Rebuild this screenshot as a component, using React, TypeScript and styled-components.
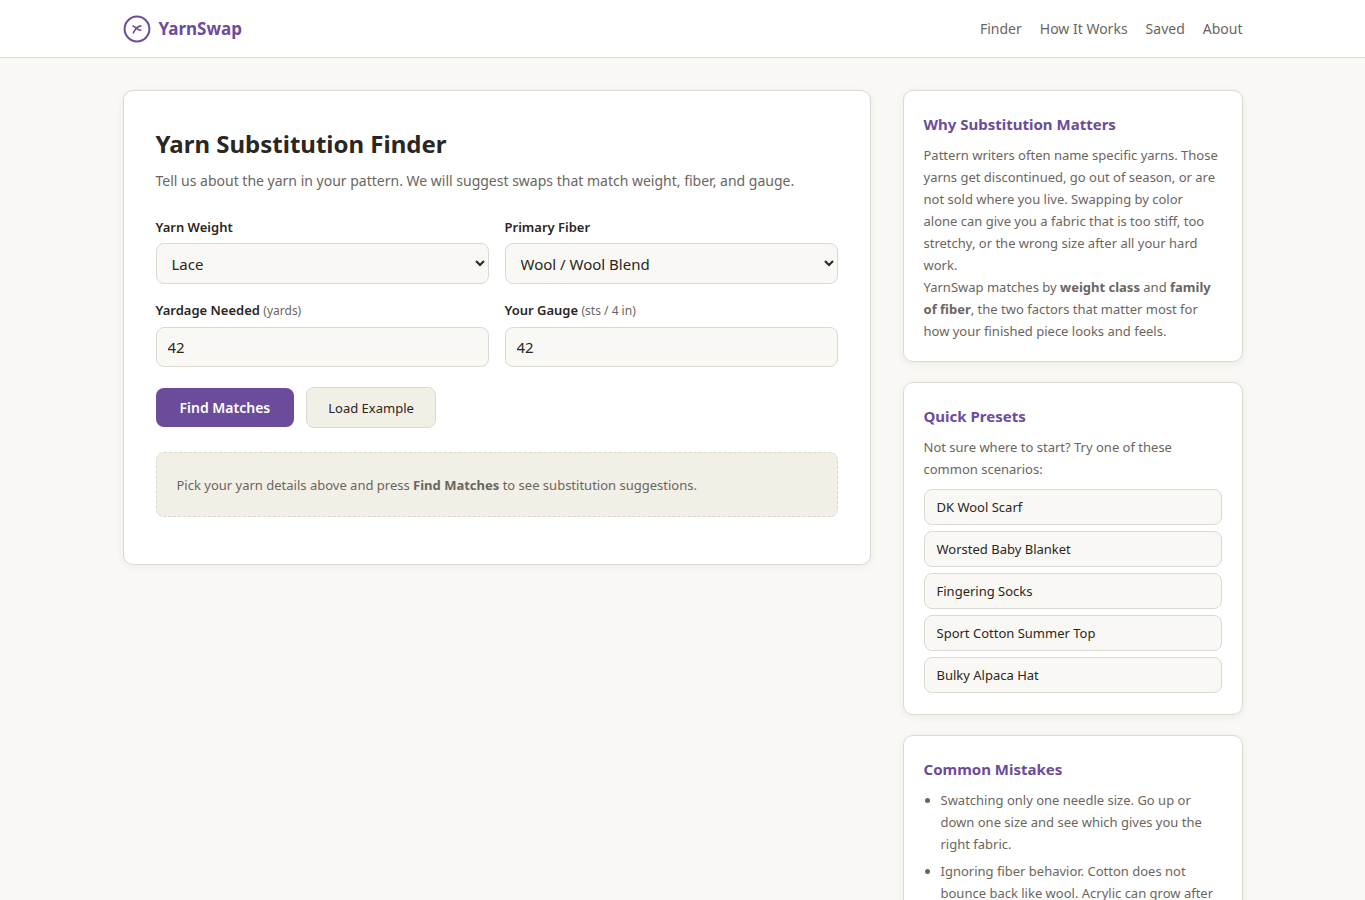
import React, { useState } from "react";
import styled, { createGlobalStyle } from "styled-components";

const color = {
  page: "#f9f8f4",
  panel: "#ffffff",
  soft: "#f2efe6",
  line: "#dad9d2",
  text: "#2a2622",
  muted: "#6b6560",
  accent: "#6b4c9a",
};

const GlobalStyle = createGlobalStyle`
  *, *::before, *::after { box-sizing: border-box; }
  body {
    margin: 0;
    background: ${color.page};
    color: ${color.text};
    font-family: "Segoe UI", "Noto Sans", "Open Sans", sans-serif;
    font-size: 14px;
    line-height: 22px;
  }
  h1, h2, p, ul { margin: 0; }
  button, input, select { font-family: inherit; color: inherit; }
`;

const Header = styled.header`
  background: ${color.panel};
  border-bottom: 1px solid ${color.line};
`;

const HeaderInner = styled.div`
  max-width: 1160px;
  margin: 0 auto;
  padding: 14px 20px;
  display: flex;
  align-items: center;
  justify-content: space-between;
`;

const Brand = styled.a`
  display: flex;
  align-items: center;
  gap: 8px;
  color: ${color.accent};
  font-size: 17px;
  font-weight: 700;
  line-height: 29px;
  text-decoration: none;
`;

const Nav = styled.nav`
  display: flex;
  gap: 18px;
`;

const NavLink = styled.a`
  color: ${color.muted};
  font-size: 14px;
  text-decoration: none;
`;

const Page = styled.div`
  max-width: 1160px;
  margin: 0 auto;
  padding: 32px 20px;
  display: grid;
  grid-template-columns: minmax(0, 1fr) 340px;
  gap: 32px;
  align-items: start;

  @media (max-width: 860px) {
    grid-template-columns: minmax(0, 1fr);
  }
`;

const Card = styled.section`
  background: ${color.panel};
  border: 1px solid ${color.line};
  border-radius: 10px;
  box-shadow: 0 2px 8px rgba(44, 40, 37, 0.06);
`;

const FinderCard = styled(Card)`
  padding: 32px 32px 47px;
`;

const Title = styled.h1`
  font-size: 24px;
  font-weight: 700;
  line-height: 42px;
`;

const Lead = styled.p`
  margin-top: 4px;
  color: ${color.muted};
  font-size: 14px;
  line-height: 24px;
`;

const Fields = styled.div`
  margin-top: 23px;
  display: grid;
  grid-template-columns: repeat(2, minmax(0, 1fr));
  gap: 15px 16px;
`;

const Field = styled.div`
  display: flex;
  flex-direction: column;
  gap: 5px;
`;

const Label = styled.label`
  font-size: 13px;
  font-weight: 600;
`;

const Unit = styled.span`
  color: ${color.muted};
  font-size: 12px;
  font-weight: 400;
`;

const Select = styled.select`
  height: 41px;
  padding: 0 0 0 11px;
  border: 1px solid ${color.line};
  border-radius: 8px;
  background: ${color.page};
  font-size: 15px;
`;

const Input = styled.input`
  height: 40px;
  padding: 0 11px;
  border: 1px solid ${color.line};
  border-radius: 8px;
  background: ${color.page};
  font-size: 15px;
`;

const Actions = styled.div`
  margin-top: 20px;
  display: flex;
  align-items: center;
  gap: 12px;
`;

const PrimaryButton = styled.button`
  height: 39px;
  padding: 0 24px;
  border: 0;
  border-radius: 8px;
  background: ${color.accent};
  color: #ffffff;
  font-size: 14px;
  font-weight: 600;
`;

const SecondaryButton = styled.button`
  height: 41px;
  padding: 0 21px;
  border: 1px solid ${color.line};
  border-radius: 8px;
  background: ${color.soft};
  font-size: 13px;
`;

const Hint = styled.p`
  margin-top: 24px;
  padding: 21px 20px 20px;
  border: 1px dashed ${color.line};
  border-radius: 8px;
  background: ${color.soft};
  color: ${color.muted};
  font-size: 13px;
`;

const Sidebar = styled.aside`
  display: flex;
  flex-direction: column;
  gap: 20px;
`;

const SideCard = styled(Card)`
  padding: 20px 20px 19px;
`;

const SideTitle = styled.h2`
  margin-bottom: 7px;
  color: ${color.accent};
  font-size: 15px;
  font-weight: 700;
  line-height: 26px;
`;

const SideText = styled.p`
  color: ${color.muted};
  font-size: 13px;
`;

const Presets = styled.div`
  margin: 9px 0 2px;
  display: flex;
  flex-direction: column;
  gap: 6px;
`;

const Preset = styled.button`
  height: 36px;
  padding: 0 12px;
  border: 1px solid ${color.line};
  border-radius: 8px;
  background: ${color.page};
  font-size: 13px;
  text-align: left;
`;

const Mistakes = styled.ul`
  padding-left: 17px;
  color: ${color.muted};
  font-size: 13px;
`;

const Mistake = styled.li`
  margin-bottom: 5px;
`;

type PresetData = { name: string; weight: string; fiber: string; yards: string; gauge: string };

const presets: PresetData[] = [
  { name: "DK Wool Scarf", weight: "DK", fiber: "Wool / Wool Blend", yards: "400", gauge: "22" },
  { name: "Worsted Baby Blanket", weight: "Worsted", fiber: "Acrylic", yards: "900", gauge: "18" },
  { name: "Fingering Socks", weight: "Fingering", fiber: "Wool / Wool Blend", yards: "420", gauge: "30" },
  { name: "Sport Cotton Summer Top", weight: "Sport", fiber: "Cotton", yards: "800", gauge: "24" },
  { name: "Bulky Alpaca Hat", weight: "Bulky", fiber: "Alpaca", yards: "120", gauge: "14" },
];

const weights = ["Lace", "Fingering", "Sport", "DK", "Worsted", "Bulky"];
const fibers = ["Wool / Wool Blend", "Cotton", "Acrylic", "Alpaca"];

const Logo = () => (
  <svg width="28" height="28" viewBox="0 0 28 28" fill="none" stroke="currentColor" strokeWidth="2" strokeLinecap="round" aria-hidden="true">
    <circle cx="14" cy="14" r="12.4" />
    <path d="M10 11c1.300.500 2.200 1.400 3.400 2.300s2.600 1.700 4.400 1.900M17.900 10.900c-1.800.2-3.400 1.100-4.700 2.500-1.200 1.300-1.900 2.700-2.800 4.400" strokeWidth="1.600" />
  </svg>
);

export default function App() {
  const [form, setForm] = useState({ weight: "Lace", fiber: "Wool / Wool Blend", yards: "42", gauge: "42" });
  const change = (key: string) => (e: React.ChangeEvent<HTMLInputElement | HTMLSelectElement>) =>
    setForm({ ...form, [key]: e.target.value });
  const load = ({ weight, fiber, yards, gauge }: PresetData) => setForm({ weight, fiber, yards, gauge });

  return (
    <>
      <GlobalStyle />
      <Header>
        <HeaderInner>
          <Brand href="#"><Logo />YarnSwap</Brand>
          <Nav>
            <NavLink href="#finder">Finder</NavLink>
            <NavLink href="#how">How It Works</NavLink>
            <NavLink href="#saved">Saved</NavLink>
            <NavLink href="#about">About</NavLink>
          </Nav>
        </HeaderInner>
      </Header>
      <Page>
        <FinderCard as="main" id="finder">
          <Title>Yarn Substitution Finder</Title>
          <Lead>Tell us about the yarn in your pattern. We will suggest swaps that match weight, fiber, and gauge.</Lead>
          <form onSubmit={(e) => e.preventDefault()}>
            <Fields>
              <Field>
                <Label htmlFor="weight">Yarn Weight</Label>
                <Select id="weight" value={form.weight} onChange={change("weight")}>
                  {weights.map((w) => <option key={w}>{w}</option>)}
                </Select>
              </Field>
              <Field>
                <Label htmlFor="fiber">Primary Fiber</Label>
                <Select id="fiber" value={form.fiber} onChange={change("fiber")}>
                  {fibers.map((f) => <option key={f}>{f}</option>)}
                </Select>
              </Field>
              <Field>
                <Label htmlFor="yards">Yardage Needed <Unit>(yards)</Unit></Label>
                <Input id="yards" type="number" value={form.yards} onChange={change("yards")} />
              </Field>
              <Field>
                <Label htmlFor="gauge">Your Gauge <Unit>(sts / 4 in)</Unit></Label>
                <Input id="gauge" type="number" value={form.gauge} onChange={change("gauge")} />
              </Field>
            </Fields>
            <Actions>
              <PrimaryButton type="submit">Find Matches</PrimaryButton>
              <SecondaryButton type="button" onClick={() => load(presets[0])}>Load Example</SecondaryButton>
            </Actions>
          </form>
          <Hint>Pick your yarn details above and press <strong>Find Matches</strong> to see substitution suggestions.</Hint>
        </FinderCard>
        <Sidebar>
          <SideCard>
            <SideTitle>Why Substitution Matters</SideTitle>
            <SideText>
              Pattern writers often name specific yarns. Those yarns get discontinued, go out of season, or are not
              sold where you live. Swapping by color<br />alone can give you a fabric that is too stiff, too
              stretchy, or the wrong size after all your hard work.
            </SideText>
            <SideText>
              YarnSwap matches by <strong>weight class</strong> and <strong>family of fiber</strong>, the two factors
              that matter most for how your finished piece looks and feels.
            </SideText>
          </SideCard>
          <SideCard>
            <SideTitle>Quick Presets</SideTitle>
            <SideText>Not sure where to start? Try one of these common scenarios:</SideText>
            <Presets>
              {presets.map((p) => (
                <Preset key={p.name} type="button" onClick={() => load(p)}>{p.name}</Preset>
              ))}
            </Presets>
          </SideCard>
          <SideCard>
            <SideTitle>Common Mistakes</SideTitle>
            <Mistakes>
              <Mistake>Swatching only one needle size. Go up or down one size and see which gives you the right fabric.</Mistake>
              <Mistake>Ignoring fiber behavior. Cotton does not bounce back like wool. Acrylic can grow after washing.</Mistake>
            </Mistakes>
          </SideCard>
        </Sidebar>
      </Page>
    </>
  );
}
